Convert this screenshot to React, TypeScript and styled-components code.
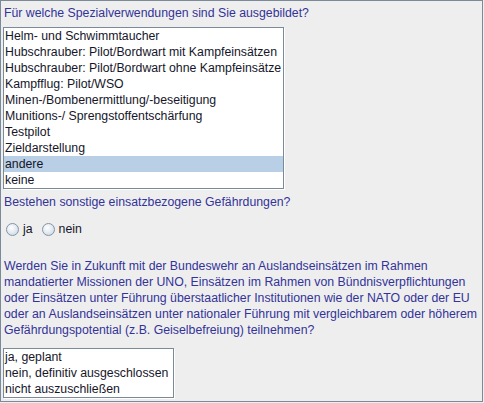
import styled, { createGlobalStyle } from 'styled-components';

const GlobalStyle = createGlobalStyle`
    html, body {
        margin: 0;
        padding: 0;
        background-color: #eeeeee;
    }
    body {
        font-family: "Liberation Sans", Arial, sans-serif;
        font-size: 12.3px;
    }
`;

const Frame = styled.div`
    box-sizing: border-box;
    width: 483px;
    height: 402px;
    border: 1px solid #7a8a99;
    background-color: #eeeeee;
    padding: 4px 2px 0 2px;
    display: flex;
    flex-direction: column;
    align-items: flex-start;
`;

const Question = styled.div<{ $gap: number }>`
    margin-top: ${({ $gap }) => $gap}px;
    padding-left: 1px;
    color: #333399;
    line-height: 16px;
    white-space: nowrap;
`;

const Paragraph = styled.div`
    margin-top: 22px;
    padding-left: 1px;
    color: #333399;
    line-height: 16px;
    white-space: pre-line;
`;

const ListBox = styled.div<{ $width: number; $gap: number }>`
    box-sizing: border-box;
    width: ${({ $width }) => $width}px;
    margin-top: ${({ $gap }) => $gap}px;
    border: 1px solid #7a8a99;
    box-shadow: 1px 1px 0 #ffffff;
    background-color: #ffffff;
`;

const ListRow = styled.div<{ $selected?: boolean }>`
    height: 16px;
    line-height: 16px;
    padding-left: 1px;
    color: #16162a;
    white-space: nowrap;
    background-color: ${({ $selected }) => ($selected ? '#b8cfe5' : 'transparent')};
`;

const RadioRow = styled.div`
    margin-top: 12px;
    height: 14px;
    display: flex;
    align-items: center;
    padding-left: 3px;
`;

const RadioOption = styled.label`
    display: flex;
    align-items: center;
    gap: 4px;
    margin-right: 9px;
    color: #16162a;
    line-height: 14px;
`;

const RadioDot = styled.span`
    box-sizing: border-box;
    width: 13px;
    height: 13px;
    border-radius: 50%;
    border: 1px solid #8394a6;
    background: radial-gradient(circle at 40% 35%, #ffffff 0%, #e6ecf2 45%, #c4d2e0 100%);
`;

const specialUses = [
    'Helm- und Schwimmtaucher',
    'Hubschrauber: Pilot/Bordwart mit Kampfeinsätzen',
    'Hubschrauber: Pilot/Bordwart ohne Kampfeinsätze',
    'Kampfflug: Pilot/WSO',
    'Minen-/Bombenermittlung/-beseitigung',
    'Munitions-/ Sprengstoffentschärfung',
    'Testpilot',
    'Zieldarstellung',
    'andere',
    'keine',
];

const missionAnswers = ['ja, geplant', 'nein, definitiv ausgeschlossen', 'nicht auszuschließen'];

const missionText = [
    'Werden Sie in Zukunft mit der Bundeswehr an Auslandseinsätzen im Rahmen',
    'mandatierter Missionen der UNO, Einsätzen im Rahmen von Bündnisverpflichtungen',
    'oder Einsätzen unter Führung überstaatlicher Institutionen wie der NATO oder der EU',
    'oder an Auslandseinsätzen unter nationaler Führung mit vergleichbarem oder höherem',
    'Gefährdungspotential (z.B. Geiselbefreiung) teilnehmen?',
].join('\n');

const App = () => {
    return (
        <>
            <GlobalStyle />
            <Frame>
                <Question $gap={0}>Für welche Spezialverwendungen sind Sie ausgebildet?</Question>
                <ListBox $width={281} $gap={6}>
                    {specialUses.map((item) => (
                        <ListRow key={item} $selected={item === 'andere'}>{item}</ListRow>
                    ))}
                </ListBox>
                <Question $gap={5}>Bestehen sonstige einsatzbezogene Gefährdungen?</Question>
                <RadioRow>
                    <RadioOption><RadioDot />ja</RadioOption>
                    <RadioOption><RadioDot />nein</RadioOption>
                </RadioRow>
                <Paragraph>{missionText}</Paragraph>
                <ListBox $width={171} $gap={10}>
                    {missionAnswers.map((item) => (
                        <ListRow key={item}>{item}</ListRow>
                    ))}
                </ListBox>
            </Frame>
        </>
    );
};

export default App;
